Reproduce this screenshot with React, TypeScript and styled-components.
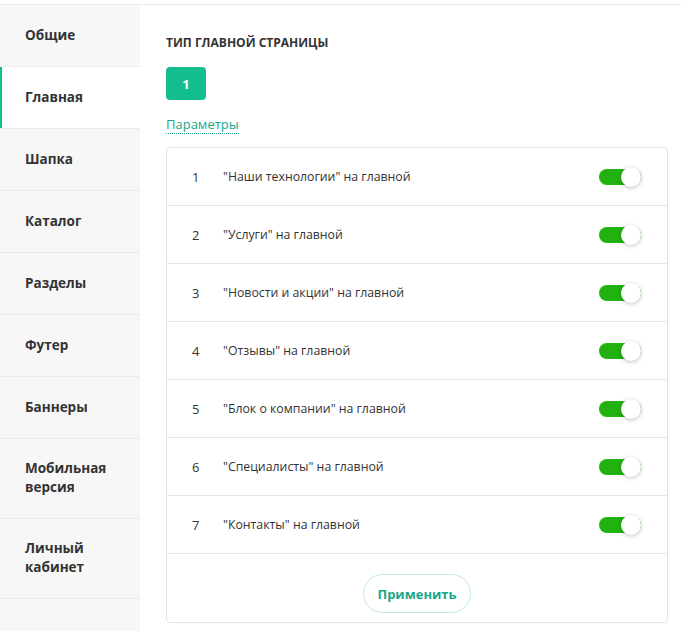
import React, { useState } from "react";
import styled, { createGlobalStyle } from "styled-components";

const Global = createGlobalStyle`
  html, body { margin: 0; padding: 0; background: #fff; }
  body { font-family: "Open Sans", "Noto Sans", Arial, sans-serif; color: #333; }
  * { box-sizing: border-box; }
`;

const Page = styled.div`
  margin-top: 4px;
  border-top: 1px solid #ececec;
  display: flex;
  min-height: 626px;
`;

const Sidebar = styled.nav`
  width: 140px;
  flex-shrink: 0;
  background: #f7f7f7;
  display: flex;
  flex-direction: column;
`;

const NavItem = styled.div<{ $active?: boolean; $tall?: boolean }>`
  height: ${(p) => (p.$tall ? 80 : 62)}px;
  border-bottom: 1px solid #ebebeb;
  display: flex;
  align-items: center;
  padding: 0 10px 1px 25px;
  font-size: 13.5px;
  font-weight: 700;
  line-height: 19px;
  color: #333;
  background: ${(p) => (p.$active ? "#fff" : "transparent")};
  box-shadow: ${(p) => (p.$active ? "inset 2px 0 0 #13bf8f" : "none")};
`;

const Main = styled.main`
  flex: 1;
  padding: 30px 13px 8px 26px;
  display: flex;
  flex-direction: column;
`;

const Heading = styled.div`
  font-size: 12px;
  font-weight: 700;
  line-height: 16px;
  text-transform: uppercase;
  color: #333;
`;

const TypeButton = styled.button`
  margin-top: 16px;
  width: 40px;
  height: 33px;
  border: none;
  border-radius: 4px;
  background: #13bd8d;
  color: #fff;
  font-family: inherit;
  font-size: 13px;
  font-weight: 700;
  padding: 0;
`;

const ParamsLink = styled.span`
  align-self: flex-start;
  margin-top: 15px;
  font-size: 13px;
  line-height: 18px;
  color: #1aa789;
  border-bottom: 1px dotted #1aa789;
`;

const Card = styled.div`
  margin-top: 13px;
  border: 1px solid #e3e3e3;
  border-radius: 4px;
  display: flex;
  flex-direction: column;
`;

const Row = styled.div`
  height: 58px;
  border-bottom: 1px solid #e6e6e6;
  display: flex;
  align-items: center;
  padding: 0 26px 0 25px;
  font-size: 12.3px;
  color: #333;
`;

const Num = styled.span`
  width: 31px;
  font-size: 13px;
`;

const Label = styled.span`
  flex: 1;
`;

const Track = styled.span<{ $on: boolean }>`
  position: relative;
  width: 42px;
  height: 16px;
  border-radius: 8px;
  background: ${(p) => (p.$on ? "#22b20f" : "#cfcfcf")};
  cursor: pointer;
`;

const Knob = styled.span<{ $on: boolean }>`
  position: absolute;
  top: -2px;
  left: ${(p) => (p.$on ? 22 : 0)}px;
  width: 20px;
  height: 20px;
  border-radius: 50%;
  background: #fff;
  box-shadow: 0 1px 4px rgba(0, 0, 0, 0.25);
`;

const Footer = styled.div`
  height: 68px;
  display: flex;
  justify-content: center;
  align-items: flex-start;
  padding-top: 20px;
`;

const ApplyButton = styled.button`
  width: 108px;
  height: 39px;
  border: 1px solid #bfe9dd;
  border-radius: 20px;
  background: #fff;
  color: #1aa789;
  font-family: inherit;
  font-size: 13px;
  font-weight: 700;
  padding: 0;
`;

const navItems: { label: string; active?: boolean; tall?: boolean }[] = [
  { label: "Общие" },
  { label: "Главная", active: true },
  { label: "Шапка" },
  { label: "Каталог" },
  { label: "Разделы" },
  { label: "Футер" },
  { label: "Баннеры" },
  { label: "Мобильная версия", tall: true },
  { label: "Личный кабинет", tall: true },
];

const blocks = [
  "\"Наши технологии\" на главной",
  "\"Услуги\" на главной",
  "\"Новости и акции\" на главной",
  "\"Отзывы\" на главной",
  "\"Блок о компании\" на главной",
  "\"Специалисты\" на главной",
  "\"Контакты\" на главной",
];

export default function App() {
  const [state, setState] = useState<boolean[]>(blocks.map(() => true));
  const toggle = (i: number) =>
    setState((s) => s.map((v, j) => (j === i ? !v : v)));

  return (
    <>
      <Global />
      <Page>
        <Sidebar>
          {navItems.map((n) => (
            <NavItem key={n.label} $active={n.active} $tall={n.tall}>
              {n.label}
            </NavItem>
          ))}
        </Sidebar>
        <Main>
          <Heading>Тип главной страницы</Heading>
          <div>
            <TypeButton>1</TypeButton>
          </div>
          <ParamsLink>Параметры</ParamsLink>
          <Card>
            {blocks.map((b, i) => (
              <Row key={b}>
                <Num>{i + 1}</Num>
                <Label>{b}</Label>
                <Track $on={state[i]} onClick={() => toggle(i)}>
                  <Knob $on={state[i]} />
                </Track>
              </Row>
            ))}
            <Footer>
              <ApplyButton>Применить</ApplyButton>
            </Footer>
          </Card>
        </Main>
      </Page>
    </>
  );
}
